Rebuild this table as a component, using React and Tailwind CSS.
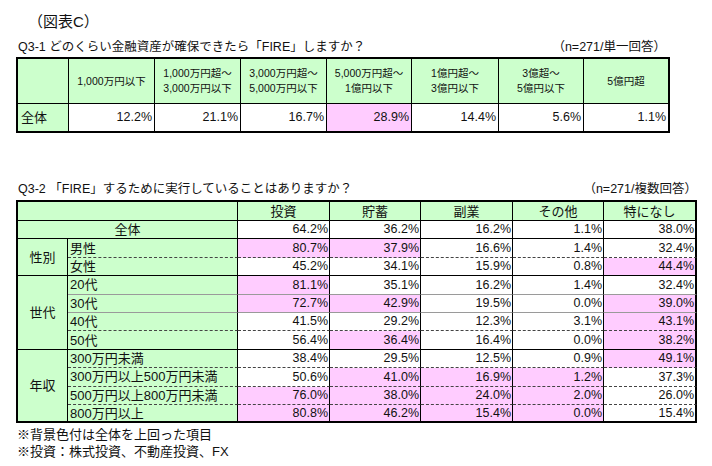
const FONT = { fontFamily: '"Liberation Sans", "Noto Sans CJK JP", sans-serif' };

const q1Heads = [
  ['1,000万円以下'],
  ['1,000万円超～', '3,000万円以下'],
  ['3,000万円超～', '5,000万円以下'],
  ['5,000万円超～', '1億円以下'],
  ['1億円超～', '3億円以下'],
  ['3億超～', '5億円以下'],
  ['5億円超'],
];
const q1Values = ['12.2%', '21.1%', '16.7%', '28.9%', '14.4%', '5.6%', '1.1%'];
const q1Widths = ['w-[86px]', 'w-[86px]', 'w-[86px]', 'w-[85px]', 'w-[87px]', 'w-[85px]', 'w-[86px]'];

const q2Heads = ['投資', '貯蓄', '副業', 'その他', '特になし'];
const q2Widths = ['w-[92px]', 'w-[91px]', 'w-[92px]', 'w-[91px]', 'w-[93px]'];

// line: style of the bottom rule under a row inside its group
const groups = [
  {
    name: '性別',
    rows: [
      { label: '男性', v: ['80.7%', '37.9%', '16.6%', '1.4%', '32.4%'], p: [1, 1, 0, 0, 0], line: 'dashed' },
      { label: '女性', v: ['45.2%', '34.1%', '15.9%', '0.8%', '44.4%'], p: [0, 0, 0, 0, 1] },
    ],
  },
  {
    name: '世代',
    rows: [
      { label: '20代', v: ['81.1%', '35.1%', '16.2%', '1.4%', '32.4%'], p: [1, 0, 0, 0, 0], line: 'thin' },
      { label: '30代', v: ['72.7%', '42.9%', '19.5%', '0.0%', '39.0%'], p: [1, 1, 0, 0, 1], line: 'thin' },
      { label: '40代', v: ['41.5%', '29.2%', '12.3%', '3.1%', '43.1%'], p: [0, 0, 0, 0, 1], line: 'dashed' },
      { label: '50代', v: ['56.4%', '36.4%', '16.4%', '0.0%', '38.2%'], p: [0, 1, 0, 0, 1] },
    ],
  },
  {
    name: '年収',
    rows: [
      { label: '300万円未満', v: ['38.4%', '29.5%', '12.5%', '0.9%', '49.1%'], p: [0, 0, 0, 0, 1], line: 'dashed' },
      { label: '300万円以上500万円未満', v: ['50.6%', '41.0%', '16.9%', '1.2%', '37.3%'], p: [0, 1, 1, 1, 0], line: 'dashed' },
      { label: '500万円以上800万円未満', v: ['76.0%', '38.0%', '24.0%', '2.0%', '26.0%'], p: [1, 1, 1, 1, 0], line: 'dashed' },
      { label: '800万円以上', v: ['80.8%', '46.2%', '15.4%', '0.0%', '15.4%'], p: [1, 1, 1, 1, 0] },
    ],
  },
];

function bottomRule(line) {
  if (line === 'dashed') return 'border-b border-b-[#444] [border-bottom-style:dashed]';
  if (line === 'thin') return 'border-b border-b-[#9a9a9a]';
  return 'border-b border-b-black';
}

function Q1Table() {
  return (
    <table className="ml-[16px] table-fixed border-separate border-spacing-0 border-t-2 border-l-2 border-black">
      <colgroup>
        <col className="w-[51px]" />
        {q1Widths.map((w, i) => (
          <col key={i} className={w} />
        ))}
      </colgroup>
      <tbody>
        <tr className="h-[45px] bg-[#ccffcc]">
          <td className="border-r border-b border-black" />
          {q1Heads.map((lines, i) => (
            <td
              key={i}
              className={`border-b border-black text-center align-middle text-[10.5px] leading-[15px] text-[#111] ${
                i === q1Heads.length - 1 ? 'border-r-2' : 'border-r'
              }`}
            >
              {lines.map((l) => (
                <div key={l}>{l}</div>
              ))}
            </td>
          ))}
        </tr>
        <tr className="h-[29px]">
          <td className="border-r border-b-2 border-black bg-[#ccffcc] pl-[3px] text-[13px] text-[#111]">全体</td>
          {q1Values.map((v, i) => (
            <td
              key={i}
              className={`border-b-2 border-black pr-[2px] text-right text-[12.5px] text-[#111] ${
                i === 3 ? 'bg-[#ffccff]' : 'bg-white'
              } ${i === q1Values.length - 1 ? 'border-r-2' : 'border-r'}`}
            >
              {v}
            </td>
          ))}
        </tr>
      </tbody>
    </table>
  );
}

function Q2Table() {
  return (
    <table className="ml-[16px] table-fixed border-separate border-spacing-0 border-t-2 border-l-2 border-black text-[#111]">
      <colgroup>
        <col className="w-[50px]" />
        <col className="w-[170px]" />
        {q2Widths.map((w, i) => (
          <col key={i} className={w} />
        ))}
      </colgroup>
      <tbody>
        <tr className="h-[19px] bg-[#ccffcc]">
          <td colSpan={2} className="border-r border-b border-black" />
          {q2Heads.map((h, i) => (
            <td
              key={h}
              className={`border-b border-black text-center text-[13px] leading-none ${
                i === q2Heads.length - 1 ? 'border-r-2' : 'border-r'
              }`}
            >
              {h}
            </td>
          ))}
        </tr>
        <tr className="h-[18.4px]">
          <td colSpan={2} className="border-r border-b border-black bg-[#ccffcc] text-center text-[13px] leading-none">
            全体
          </td>
          {['64.2%', '36.2%', '16.2%', '1.1%', '38.0%'].map((v, i) => (
            <td
              key={i}
              className={`border-b border-black bg-white pr-[1px] text-right text-[12.5px] leading-none ${
                i === 4 ? 'border-r-2' : 'border-r'
              }`}
            >
              {v}
            </td>
          ))}
        </tr>
        {groups.map((g, gi) =>
          g.rows.map((r, ri) => {
            const lastRow = gi === groups.length - 1 && ri === g.rows.length - 1;
            const rule = lastRow ? 'border-b-2 border-b-black' : bottomRule(r.line);
            return (
              <tr key={r.label} className="h-[18.4px]">
                {ri === 0 && (
                  <td
                    rowSpan={g.rows.length}
                    className={`border-r border-black bg-[#ccffcc] text-center text-[13px] leading-none ${
                      gi === groups.length - 1 ? 'border-b-2' : 'border-b'
                    }`}
                  >
                    {g.name}
                  </td>
                )}
                <td className={`border-r border-r-black bg-[#ccffcc] pl-[2px] text-[13px] leading-none ${rule}`}>
                  {r.label}
                </td>
                {r.v.map((v, i) => (
                  <td
                    key={i}
                    className={`pr-[1px] text-right text-[12.5px] leading-none border-r-black ${rule} ${
                      r.p[i] ? 'bg-[#ffccff]' : 'bg-white'
                    } ${i === 4 ? 'border-r-2' : 'border-r'}`}
                  >
                    {v}
                  </td>
                ))}
              </tr>
            );
          })
        )}
      </tbody>
    </table>
  );
}

export default function App() {
  return (
    <div className="h-[466px] w-[712px] overflow-hidden bg-white text-[#111]" style={FONT}>
      <div className="pl-[28px] pt-[12px] text-[15px] leading-[20px]">（図表C）</div>

      <div className="ml-[16px] flex h-[25px] w-[652px] items-end justify-between pb-[2px] text-[12.5px] leading-[16px]">
        <span className="pl-[2px]">Q3-1 どのくらい金融資産が確保できたら「FIRE」しますか？</span>
        <span className="pr-[2px]">（n=271/単一回答）</span>
      </div>

      <Q1Table />

      <div className="ml-[16px] flex h-[67px] w-[681px] items-end justify-between pb-[3px] text-[12.5px] leading-[16px]">
        <span className="pl-[2px]">Q3-2 「FIRE」するために実行していることはありますか？</span>
        <span>（n=271/複数回答）</span>
      </div>

      <Q2Table />

      <div className="mt-[3px] pl-[17px] text-[13px] leading-[17px]">
        <div>※背景色付は全体を上回った項目</div>
        <div>※投資：株式投資、不動産投資、FX</div>
      </div>
    </div>
  );
}
